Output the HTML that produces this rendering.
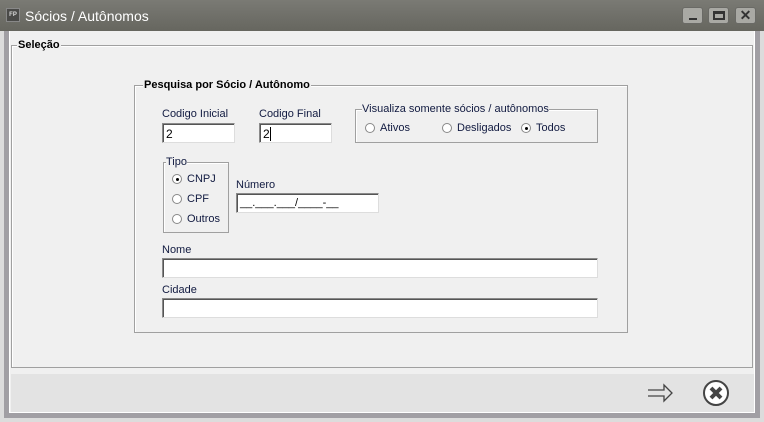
<!DOCTYPE html>
<html><head><style>
*{margin:0;padding:0;box-sizing:border-box}
body{width:764px;height:422px;overflow:hidden;background:#dcdcdc;font-family:"Liberation Sans",sans-serif;font-size:11px;color:#000;position:relative}
.a{position:absolute}
.title{left:0;top:0;width:764px;height:31px;background:linear-gradient(#7a7a74,#66665f);}
.frame{left:4px;top:31px;width:756px;height:387px;background:#a19fa4}
.content{left:9px;top:31px;width:746px;height:382px;background:#f0f0f0;border-left:1px solid #fff;border-right:1px solid #fff;border-bottom:1px solid #fff}
.grp{border:1px solid #a0a0a0;box-shadow:1px 1px 0 #fff inset}
.lg{background:#f0f0f0;padding:0 1px;line-height:12px}
.inp{background:#fff;border:1px solid #8a8a8a;border-right-color:#ddd;border-bottom-color:#ddd;box-shadow:1px 1px 0 #555 inset;height:20px;font-size:12px;padding:3px 0 0 3px}
.lbl{color:#111a40;font-size:11px}
.rb{width:10px;height:10px;border-radius:50%;border:1px solid #888;background:#fff;}
.rb.on::after{content:"";position:absolute;left:2.5px;top:2.5px;width:3px;height:3px;border-radius:50%;background:#000}
.btn{top:7px;width:21px;height:17px;background:#a9a9a4;border:1px solid #6a6a66;border-radius:3px}
</style></head><body>
<div class="a title"></div>
<div class="a" style="left:6px;top:8px;width:14px;height:14px;background:#4a4a48;border:1px solid #888;color:#ddd;font-size:6px;line-height:12px;text-align:center;font-weight:bold">FP</div>
<div class="a" style="left:25px;top:8px;color:#fff;font-size:14px">Sócios / Autônomos</div>
<div class="a btn" style="left:682px"><div class="a" style="left:6px;top:10px;width:8px;height:2px;background:#333"></div></div>
<div class="a btn" style="left:708px"><div class="a" style="left:4px;top:3px;width:12px;height:9px;border:2px solid #333;border-top-width:3px"></div></div>
<div class="a btn" style="left:735px;color:#333;font-weight:bold;font-size:14px;text-align:center;line-height:15px">✕</div>
<div class="a frame"></div>
<div class="a content"></div>
<div class="a" style="left:11px;top:374px;width:743px;height:38px;background:#e3e3e3"></div>
<div class="a grp" style="left:11px;top:45px;width:742px;height:323px"></div>
<div class="a lg" style="left:17px;top:39px;font-weight:bold">Seleção</div>

<div class="a grp" style="left:134px;top:85px;width:494px;height:248px"></div>
<div class="a lg" style="left:143px;top:79px;font-weight:bold">Pesquisa por Sócio / Autônomo</div>

<div class="a lbl" style="left:162px;top:108px">Codigo Inicial</div>
<div class="a inp" style="left:162px;top:123px;width:73px">2</div>
<div class="a lbl" style="left:259px;top:108px">Codigo Final</div>
<div class="a inp" style="left:259px;top:123px;width:73px">2<span style="border-left:1px solid #000;margin-left:0"></span></div>

<div class="a grp" style="left:355px;top:109px;width:243px;height:34px"></div>
<div class="a lg lbl" style="left:362px;top:103px;padding:0">Visualiza somente sócios / autônomos</div>
<div class="a rb" style="left:365px;top:123px"></div><div class="a lbl" style="left:380px;top:122px">Ativos</div>
<div class="a rb" style="left:442px;top:123px"></div><div class="a lbl" style="left:457px;top:122px">Desligados</div>
<div class="a rb on" style="left:521px;top:123px"></div><div class="a lbl" style="left:536px;top:122px">Todos</div>

<div class="a grp" style="left:163px;top:162px;width:66px;height:71px"></div>
<div class="a lg lbl" style="left:166px;top:156px;padding:0">Tipo</div>
<div class="a rb on" style="left:172px;top:174px"></div><div class="a lbl" style="left:187px;top:173px">CNPJ</div>
<div class="a rb" style="left:172px;top:194px"></div><div class="a lbl" style="left:187px;top:193px">CPF</div>
<div class="a rb" style="left:172px;top:214px"></div><div class="a lbl" style="left:187px;top:213px">Outros</div>

<div class="a lbl" style="left:236px;top:179px">Número</div>
<div class="a inp" style="left:236px;top:193px;width:143px;font-size:11px">__.___.___/____-__</div>

<div class="a lbl" style="left:162px;top:244px">Nome</div>
<div class="a inp" style="left:162px;top:258px;width:436px"></div>
<div class="a lbl" style="left:162px;top:284px">Cidade</div>
<div class="a inp" style="left:162px;top:298px;width:436px"></div>

<svg class="a" style="left:646px;top:381px" width="28" height="24" viewBox="0 0 28 24"><path d="M2 9H18V4L26 12L18 20V15H2" fill="none" stroke="#444" stroke-width="1.3"/></svg>
<svg class="a" style="left:702px;top:379px" width="28" height="28" viewBox="0 0 28 28"><circle cx="14" cy="14" r="12" fill="#fff" stroke="#444" stroke-width="2"/><path d="M9 9L19 19M19 9L9 19" stroke="#444" stroke-width="4"/></svg>
</body></html>
